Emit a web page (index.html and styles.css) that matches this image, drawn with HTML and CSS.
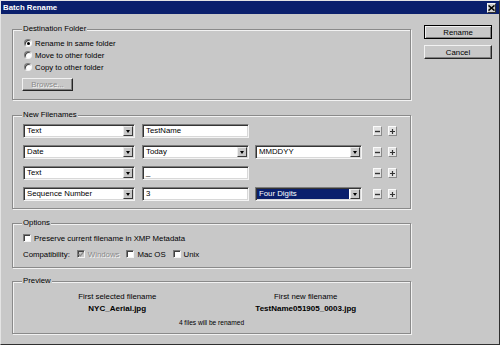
FILE: index.html
```html
<!DOCTYPE html>
<html>
<head>
<meta charset="utf-8">
<link rel="stylesheet" href="styles.css">
</head>
<body>
<div class="window">
  <div class="titlebar">
    <span class="title">Batch Rename</span>
    <span class="close"><svg width="7" height="6" viewBox="0 0 7 6"><path d="M0.5 0.5 L6.5 5.5 M6.5 0.5 L0.5 5.5" stroke="#000" stroke-width="1.6"/></svg></span>
  </div>
  <div class="body">
    <div class="main">
      <fieldset class="group dest">
        <legend>Destination Folder</legend>
        <div class="opt"><span class="radio on"></span>Rename in same folder</div>
        <div class="opt"><span class="radio"></span>Move to other folder</div>
        <div class="opt"><span class="radio"></span>Copy to other folder</div>
        <button class="btn browse" disabled>Browse...</button>
      </fieldset>

      <fieldset class="group names">
        <legend>New Filenames</legend>
        <div class="row">
          <div class="field select wide"><span class="val">Text</span><span class="arrow"></span></div>
          <div class="field input mid"><span class="val">TestName</span></div>
          <div class="spacer mid"></div>
          <span class="mini"><svg width="5" height="5" viewBox="0 0 5 5"><path d="M0 2.5 H5" stroke="#333" stroke-width="1.4"/></svg></span>
          <span class="mini"><svg width="5" height="5" viewBox="0 0 5 5"><path d="M0 2.5 H5 M2.5 0 V5" stroke="#333" stroke-width="1.2"/></svg></span>
        </div>
        <div class="row">
          <div class="field select wide"><span class="val">Date</span><span class="arrow"></span></div>
          <div class="field select mid"><span class="val">Today</span><span class="arrow"></span></div>
          <div class="field select mid"><span class="val">MMDDYY</span><span class="arrow"></span></div>
          <span class="mini"><svg width="5" height="5" viewBox="0 0 5 5"><path d="M0 2.5 H5" stroke="#333" stroke-width="1.4"/></svg></span>
          <span class="mini"><svg width="5" height="5" viewBox="0 0 5 5"><path d="M0 2.5 H5 M2.5 0 V5" stroke="#333" stroke-width="1.2"/></svg></span>
        </div>
        <div class="row">
          <div class="field select wide"><span class="val">Text</span><span class="arrow"></span></div>
          <div class="field input mid"><span class="val">_</span></div>
          <div class="spacer mid"></div>
          <span class="mini"><svg width="5" height="5" viewBox="0 0 5 5"><path d="M0 2.5 H5" stroke="#333" stroke-width="1.4"/></svg></span>
          <span class="mini"><svg width="5" height="5" viewBox="0 0 5 5"><path d="M0 2.5 H5 M2.5 0 V5" stroke="#333" stroke-width="1.2"/></svg></span>
        </div>
        <div class="row">
          <div class="field select wide"><span class="val">Sequence Number</span><span class="arrow"></span></div>
          <div class="field input mid"><span class="val">3</span></div>
          <div class="field select mid focus"><span class="val">Four Digits</span><span class="arrow"></span></div>
          <span class="mini"><svg width="5" height="5" viewBox="0 0 5 5"><path d="M0 2.5 H5" stroke="#333" stroke-width="1.4"/></svg></span>
          <span class="mini"><svg width="5" height="5" viewBox="0 0 5 5"><path d="M0 2.5 H5 M2.5 0 V5" stroke="#333" stroke-width="1.2"/></svg></span>
        </div>
      </fieldset>

      <fieldset class="group options">
        <legend>Options</legend>
        <div class="chkrow"><span class="check"></span>Preserve current filename in XMP Metadata</div>
        <div class="chkrow compat">
          <span class="lbl">Compatibility:</span>
          <span class="check disabled"><svg width="6" height="6" viewBox="0 0 6 6"><path d="M0.5 3 L2.3 4.8 L5.5 1" stroke="#8c8c8c" stroke-width="1.3" fill="none"/></svg></span>
          <span class="dim">Windows</span>
          <span class="check"></span>
          <span>Mac OS</span>
          <span class="check"></span>
          <span>Unix</span>
        </div>
      </fieldset>

      <fieldset class="group preview">
        <legend>Preview</legend>
        <div class="pgrid">
          <div class="pcol"><div class="ph">First selected filename</div><div class="pv">NYC_Aerial.jpg</div></div>
          <div class="pcol"><div class="ph">First new filename</div><div class="pv">TestName051905_0003.jpg</div></div>
        </div>
        <div class="count">4 files will be renamed</div>
      </fieldset>
    </div>
    <div class="side">
      <button class="btn default">Rename</button>
      <button class="btn">Cancel</button>
    </div>
  </div>
</div>
</body>
</html>
```

FILE: styles.css
```css
html, body {
  margin: 0;
  padding: 0;
}
body {
  font-family: "Liberation Sans", Arial, sans-serif;
  font-size: 7.8px;
  color: #000;
  background: #c8c8c8;
}
.window {
  width: 500px;
  height: 345px;
  box-sizing: border-box;
  background: #c8c8c8;
  border: 1px solid;
  border-color: #e4e4e4 #303030 #303030 #e4e4e4;
  display: flex;
  flex-direction: column;
}
.titlebar {
  height: 13px;
  flex: none;
  background: #0a1f6c;
  color: #fff;
  font-weight: bold;
  display: flex;
  align-items: center;
  padding: 0 3px 0 2px;
}
.close {
  margin-left: auto;
  width: 9px;
  height: 10px;
  box-sizing: border-box;
  background: #cfcfcf;
  border: 1px solid;
  border-color: #f4f4f4 #303030 #303030 #f4f4f4;
  display: flex;
  align-items: center;
  justify-content: center;
}
.body {
  display: flex;
  padding: 10px 0 0 11px;
}
.main {
  width: 399px;
  display: flex;
  flex-direction: column;
}
.side {
  margin-left: 13px;
  padding-top: 1px;
  display: flex;
  flex-direction: column;
  gap: 6px;
}
.group {
  margin: 0;
  min-width: 0;
  border: 1px solid #8a8a8a;
  box-shadow: inset 1px 1px 0 #f2f2f2, 1px 1px 0 #f2f2f2;
  padding: 0 10px;
}
.group legend {
  padding: 0 1px;
  margin-left: -1px;
  line-height: 10px;
  background: #c8c8c8;
}
.dest { padding-top: 3px; padding-bottom: 8px; }
.names { margin-top: 10px; padding-top: 4px; padding-bottom: 7px; }
.options { margin-top: 9px; padding-top: 5px; padding-bottom: 8px; }
.preview { margin-top: 8px; padding-top: 6px; padding-bottom: 6px; }

.opt {
  height: 12px;
  display: flex;
  align-items: center;
}
.radio {
  width: 8px;
  height: 8px;
  box-sizing: border-box;
  border-radius: 50%;
  background: #fff;
  border: 1px solid;
  border-color: #7a7a7a #f4f4f4 #f4f4f4 #7a7a7a;
  box-shadow: inset 1px 1px 0 #404040;
  margin: 0 3px 0 1px;
  display: flex;
  align-items: center;
  justify-content: center;
}
.radio.on::after {
  content: "";
  width: 3px;
  height: 3px;
  border-radius: 50%;
  background: #000;
}
.btn {
  font: inherit;
  color: #000;
  width: 68px;
  height: 14px;
  padding: 0;
  line-height: 11px;
  background: #c8c8c8;
  border: 1px solid;
  border-color: #f2f2f2 #252525 #252525 #f2f2f2;
  box-shadow: inset -1px -1px 0 #808080;
}
.btn.default {
  border-color: #000;
  box-shadow: inset 1px 1px 0 #f2f2f2, inset -1px -1px 0 #808080;
}
.btn.browse {
  width: 51px;
  height: 13px;
  margin: 5px 0 0 -1px;
  color: #8a8a8a;
  text-shadow: 1px 1px 0 #f4f4f4;
  display: block;
}

.row {
  display: flex;
  align-items: center;
  height: 14px;
}
.row + .row { margin-top: 7px; }
.field {
  height: 14px;
  box-sizing: border-box;
  background: #fff;
  border: 1px solid;
  border-color: #7c7c7c #f4f4f4 #f4f4f4 #7c7c7c;
  box-shadow: inset 1px 1px 0 #353535, inset -1px -1px 0 #d8d8d8;
  padding: 1px;
  display: flex;
  align-items: stretch;
}
.wide { width: 112px; flex: none; }
.mid { width: 107px; flex: none; }
.row > .field + .field,
.row > .field + .spacer { margin-left: 7px; }
.row > .mid + .mid { margin-left: 6px; }
.val {
  flex: 1;
  padding-left: 2px;
  line-height: 10px;
  white-space: nowrap;
  overflow: hidden;
}
.arrow {
  width: 10px;
  flex: none;
  box-sizing: border-box;
  background: #c8c8c8;
  border: 1px solid;
  border-color: #ececec #3a3a3a #3a3a3a #ececec;
  display: flex;
  align-items: center;
  justify-content: center;
}
.arrow::after {
  content: "";
  width: 0;
  height: 0;
  border-left: 2.5px solid transparent;
  border-right: 2.5px solid transparent;
  border-top: 3px solid #000;
}
.focus .val {
  background: #0a1f6c;
  color: #fff;
  margin-right: 1px;
}
.mini {
  width: 9px;
  height: 10px;
  box-sizing: border-box;
  flex: none;
  background: #e2e2e2;
  border: 1px solid;
  border-color: #fbfbfb #8a8a8a #8a8a8a #fbfbfb;
  display: flex;
  align-items: center;
  justify-content: center;
}
.mini:first-of-type { margin-left: 11px; }
.mini + .mini { margin-left: 6px; }

.chkrow {
  height: 10px;
  display: flex;
  align-items: center;
}
.chkrow + .chkrow { margin-top: 6px; }
.check {
  width: 8px;
  height: 8px;
  box-sizing: border-box;
  background: #fff;
  border: 1px solid;
  border-color: #7a7a7a #f4f4f4 #f4f4f4 #7a7a7a;
  box-shadow: inset 1px 1px 0 #404040;
  margin-right: 3px;
  flex: none;
  display: flex;
  align-items: center;
  justify-content: center;
}
.check.disabled { background: #c8c8c8; }
.compat .lbl { margin-right: 7px; }
.compat .dim {
  color: #8a8a8a;
  text-shadow: 1px 1px 0 #f4f4f4;
  margin-right: 7px;
}
.compat span:nth-child(5) { margin-right: 7px; }

.pgrid {
  display: grid;
  grid-template-columns: 1fr 1fr;
}
.pcol { text-align: center; }
.ph { line-height: 10px; }
.pv {
  font-weight: bold;
  font-size: 8px;
  line-height: 10px;
  margin-top: 2px;
}
.count {
  text-align: center;
  font-size: 6.6px;
  line-height: 9px;
  margin-top: 4px;
}
```
